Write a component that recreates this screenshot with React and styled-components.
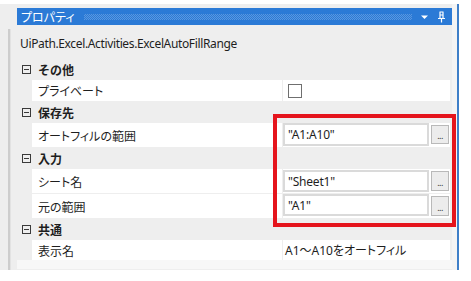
import React from "react";
import styled, { createGlobalStyle } from "styled-components";

const Global = createGlobalStyle`
  html, body { margin: 0; padding: 0; background: #ffffff; }
  body { font-family: "Noto Sans", "Noto Sans CJK JP", sans-serif; }
`;

const Frame = styled.div`
  position: relative;
  margin-top: 4px;
  width: 457px;
  height: 266px;
  background: #eeeeee;
  border-right: 2px solid #3f7fc8;
  display: flex;
  flex-direction: row;
`;

const Gutter = styled.div`
  width: 17px;
  display: flex;
  flex-direction: column;
  align-items: flex-start;
`;

const GutterLine = styled.div`
  margin-top: 25px;
  margin-left: 8px;
  width: 2px;
  flex: 1;
  background: #cdcdcd;
  border-right: 1px solid #e2e2e2;
`;

const Panel = styled.div`
  width: 435px;
  display: flex;
  flex-direction: column;
  padding-top: 4px;
`;

const RightStrip = styled.div`
  width: 5px;
  background: #f4f4f4;
`;

const TitleBar = styled.div`
  height: 17px;
  background: #2b7ad6;
  display: flex;
  align-items: center;
  padding-left: 4px;
  padding-right: 6px;
  color: #ffffff;
  font-family: "Noto Sans CJK JP", sans-serif;
  font-size: 12px;
  font-feature-settings: "palt";
`;

const TitleText = styled.span`
  line-height: 17px;
`;

const Dots = styled.div`
  flex: 1;
  height: 6px;
  margin-left: 9px;
  margin-right: 8px;
  background-image: conic-gradient(
    rgba(255, 255, 255, 0.22) 25%,
    transparent 0 50%,
    rgba(255, 255, 255, 0.22) 0 75%,
    transparent 0
  );
  background-size: 2px 2px;
`;

const TitleIcon = styled.svg`
  display: block;
  margin-left: ${(p) => p.$gap || 0}px;
`;

const TypeName = styled.div`
  height: 34px;
  display: flex;
  align-items: center;
  padding-left: 3px;
  padding-top: 3px;
  box-sizing: border-box;
  font-family: "Noto Sans", sans-serif;
  font-size: 12px;
  letter-spacing: -0.36px;
  color: #1e1e1e;
`;

const Category = styled.div`
  height: ${(p) => p.$h}px;
  display: flex;
  align-items: center;
  padding-left: 5px;
  font-family: "Noto Sans CJK JP", sans-serif;
  font-size: 12px;
  font-weight: 700;
  color: #1e1e1e;
`;

const Expander = styled.span`
  width: 7px;
  height: 7px;
  border: 1px solid #3a3a3a;
  margin-right: 7px;
  display: flex;
  align-items: center;
  justify-content: center;
  &::after {
    content: "";
    width: 5px;
    height: 1px;
    background: #3a3a3a;
  }
`;

const Row = styled.div`
  height: ${(p) => p.$h}px;
  box-sizing: border-box;
  margin-left: 15px;
  width: 418px;
  display: flex;
  border-bottom: ${(p) => (p.$sep ? "1px solid #eeeeee" : "none")};
`;

const Label = styled.div`
  width: 250px;
  background: #ffffff;
  display: flex;
  align-items: center;
  padding-left: 6px;
  box-sizing: border-box;
  font-family: "Noto Sans CJK JP", sans-serif;
  font-size: 12px;
  font-feature-settings: "palt";
  color: #1e1e1e;
  margin-right: 1px;
`;

const Value = styled.div`
  flex: 1;
  background: #ffffff;
  display: flex;
  align-items: ${(p) => (p.$top ? "flex-start" : "center")};
  box-sizing: border-box;
  padding-left: ${(p) => p.$pad || 0}px;
  font-family: "Noto Sans", "Noto Sans CJK JP", sans-serif;
  font-size: 12px;
  font-feature-settings: "palt";
  color: #1e1e1e;
`;

const Check = styled.span`
  width: 12px;
  height: 12px;
  border: 1px solid #6f6f6f;
  background: #fff;
  margin-top: 1px;
`;

const Input = styled.div`
  width: 146px;
  height: ${(p) => p.$h}px;
  box-sizing: border-box;
  border: 2px solid #dadada;
  background: #ffffff;
  display: flex;
  align-items: center;
  padding-left: 3px;
  font-family: "Noto Sans", sans-serif;
  font-size: 12px;
  letter-spacing: -0.2px;
  color: #1e1e1e;
  margin-top: ${(p) => p.$mt || 0}px;
`;

const DotsButton = styled.div`
  width: 18px;
  height: ${(p) => p.$h}px;
  box-sizing: border-box;
  margin-left: 2px;
  margin-top: ${(p) => p.$mt || 0}px;
  border: 1px solid #b9b9b9;
  background: #ececec;
  display: flex;
  align-items: flex-end;
  justify-content: center;
  padding-bottom: 4px;
  font-family: "Noto Sans", sans-serif;
  font-size: 9px;
  line-height: 6px;
  color: #333;
  letter-spacing: -0.5px;
`;

const Footer = styled.div`
  height: 9px;
  background: #f7f7f7;
`;

const Highlight = styled.div`
  position: absolute;
  left: 273px;
  top: 110px;
  width: 183px;
  height: 113px;
  box-sizing: border-box;
  border: 4px solid #e5141c;
  pointer-events: none;
`;

function TextProp({ label, value, h, sep, ih, bh, imt, bmt }) {
  return (
    <Row $h={h} $sep={sep}>
      <Label>{label}</Label>
      <Value $top>
        <Input $h={ih} $mt={imt}>{value}</Input>
        <DotsButton $h={bh} $mt={bmt}>...</DotsButton>
      </Value>
    </Row>
  );
}

export default function App() {
  return (
    <>
      <Global />
      <Frame>
        <Gutter>
          <GutterLine />
        </Gutter>
        <Panel>
          <TitleBar>
            <TitleText>プロパティ</TitleText>
            <Dots />
            <TitleIcon width="9" height="6" viewBox="0 0 9 6">
              <path d="M1 1.5 H8 L4.5 5 Z" fill="#ffffff" />
            </TitleIcon>
            <TitleIcon $gap={8} width="9" height="12" viewBox="0 0 9 12">
              <path d="M2.5 1 H6.5 M3 1 V7 M6 1 V7 M3 4 H6 M1 7.5 H8 M4.5 7.5 V11.5" stroke="#ffffff" strokeWidth="1.2" fill="none" />
            </TitleIcon>
          </TitleBar>
          <TypeName>UiPath.Excel.Activities.ExcelAutoFillRange</TypeName>

          <Category $h={21}><Expander />その他</Category>
          <Row $h={21}>
            <Label>プライベート</Label>
            <Value $pad={5}><Check /></Value>
          </Row>

          <Category $h={22}><Expander />保存先</Category>
          <TextProp label="オートフィルの範囲" value={'"A1:A10"'} h={24} ih={23} bh={19} imt={0} bmt={2} />

          <Category $h={22}><Expander />入力</Category>
          <TextProp label="シート名" value={'"Sheet1"'} h={25} sep ih={22} bh={20} imt={1} bmt={2} />
          <TextProp label="元の範囲" value={'"A1"'} h={24} ih={22} bh={20} imt={0} bmt={2} />

          <Category $h={22}><Expander />共通</Category>
          <Row $h={20}>
            <Label>表示名</Label>
            <Value $pad={2}>A1～A10をオートフィル</Value>
          </Row>
          <Footer />
        </Panel>
        <RightStrip />
        <Highlight />
      </Frame>
    </>
  );
}
